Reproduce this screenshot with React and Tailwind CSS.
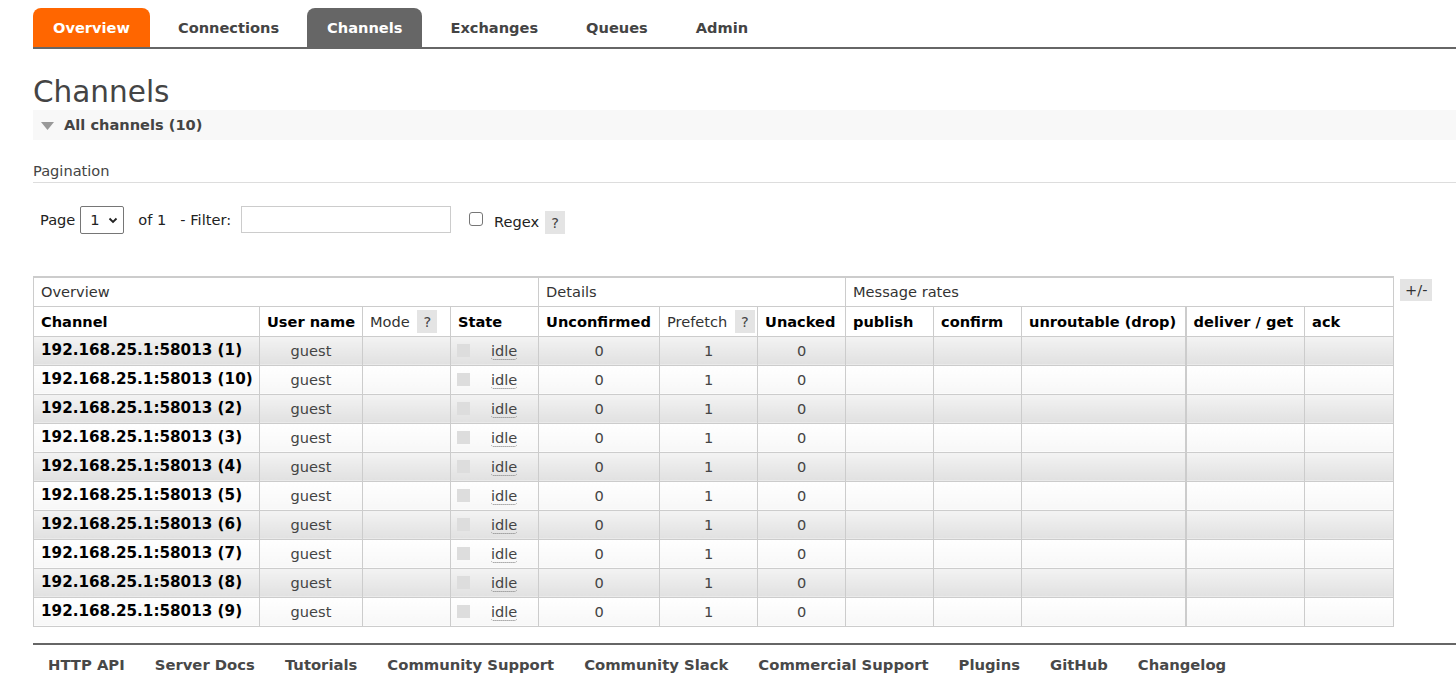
import React from 'react';

const tabs = ['Overview', 'Connections', 'Channels', 'Exchanges', 'Queues', 'Admin'];
const rows = ['1', '10', '2', '3', '4', '5', '6', '7', '8', '9'];
const footerLinks = [
  'HTTP API',
  'Server Docs',
  'Tutorials',
  'Community Support',
  'Community Slack',
  'Commercial Support',
  'Plugins',
  'GitHub',
  'Changelog',
];

function Help() {
  return (
    <span className="inline-block bg-[#e4e4e4] px-[6px] leading-[23px] text-[#444] font-normal">?</span>
  );
}

function Tab({ label }) {
  let cls = 'text-[#444]';
  if (label === 'Overview') cls = 'bg-[#ff6600] text-white';
  if (label === 'Channels') cls = 'bg-[#666666] text-white';
  return (
    <li className={`px-[20px] h-[39px] flex items-center rounded-t-[8px] font-bold ${cls}`}>{label}</li>
  );
}

export default function App() {
  const cellBase = 'border border-[#cccccc] h-[29px] p-0';
  return (
    <div
      className="min-h-screen bg-white pl-[33px] text-[14.6px] text-[#444]"
      style={{ fontFamily: '"DejaVu Sans", Verdana, sans-serif' }}
    >
      <ul className="flex gap-[8px] pt-[8px] border-b-2 border-[#666666]">
        {tabs.map((t) => (
          <Tab key={t} label={t} />
        ))}
      </ul>

      <h1 className="mt-[25px] text-[29.5px] leading-[36px] text-[#444]">Channels</h1>

      <div className="h-[30px] bg-[#f8f8f8] flex items-center pl-[8px] font-bold text-[#444]">
        <svg width="13" height="8" viewBox="0 0 13 8" className="mr-[10px] mt-[1px]">
          <polygon points="0,0 13,0 6.5,8" fill="#999" />
        </svg>
        All channels (10)
      </div>

      <div className="mt-[22px] pb-[2px] border-b border-[#dddddd] leading-[18px]">Pagination</div>

      <div className="mt-[23px] flex items-center pl-[7px] text-[#222]">
        <span>Page</span>
        <div className="ml-[5px] w-[44px] h-[28px] border border-[#767676] rounded-[2px] flex items-center pl-[9px] gap-[8px] text-[#222]">
          <span>1</span>
          <svg width="10" height="7" viewBox="0 0 10 7">
            <path d="M1.5 1.5 L5 5 L8.5 1.5" stroke="#222" strokeWidth="1.8" fill="none" />
          </svg>
        </div>
        <span className="ml-[14px]">of 1</span>
        <span className="ml-[14px]">- Filter:</span>
        <div className="ml-[10px] w-[210px] h-[27px] border border-[#cccccc] mt-[-2px]" />
        <div className="ml-[18px] w-[14px] h-[14px] border border-[#767676] rounded-[3px] mt-[-3px]" />
        <span className="ml-[11px] mt-[4px]">Regex</span>
        <span className="ml-[6px] mt-[4px]">
          <Help />
        </span>
      </div>

      <div className="mt-[42px] flex items-start">
        <table className="border-collapse table-fixed w-[1360px] border-t-2 border-[#cccccc]">
          <colgroup>
            <col className="w-[226px]" />
            <col className="w-[103px]" />
            <col className="w-[88px]" />
            <col className="w-[88px]" />
            <col className="w-[121px]" />
            <col className="w-[98px]" />
            <col className="w-[88px]" />
            <col className="w-[88px]" />
            <col className="w-[88px]" />
            <col className="w-[164px]" />
            <col className="w-[119px]" />
            <col className="w-[89px]" />
          </colgroup>
          <thead>
            <tr className="text-[#333]">
              <th colSpan={4} className={`${cellBase} font-normal text-left pl-[7px]`}>Overview</th>
              <th colSpan={3} className={`${cellBase} font-normal text-left pl-[7px]`}>Details</th>
              <th colSpan={5} className={`${cellBase} font-normal text-left pl-[7px]`}>Message rates</th>
            </tr>
            <tr className="text-black">
              <th className={`${cellBase} h-[30px] text-left pl-[7px] pt-[2px]`}>Channel</th>
              <th className={`${cellBase} h-[30px] text-left pl-[7px] pt-[2px]`}>User name</th>
              <th className={`${cellBase} h-[30px] text-left pl-[7px] font-normal text-[#333]`}>
                Mode <span className="ml-[3px]"><Help /></span>
              </th>
              <th className={`${cellBase} h-[30px] text-left pl-[7px] pt-[2px]`}>State</th>
              <th className={`${cellBase} h-[30px] text-left pl-[7px] pt-[2px]`}>Unconfirmed</th>
              <th className={`${cellBase} h-[30px] text-left pl-[7px] font-normal text-[#333]`}>
                Prefetch <span className="ml-[3px]"><Help /></span>
              </th>
              <th className={`${cellBase} h-[30px] text-left pl-[7px] pt-[2px]`}>Unacked</th>
              <th className={`${cellBase} h-[30px] text-left pl-[7px] pt-[2px]`}>publish</th>
              <th className={`${cellBase} h-[30px] text-left pl-[7px] pt-[2px]`}>confirm</th>
              <th className={`${cellBase} h-[30px] text-left pl-[7px] pt-[2px]`}>unroutable (drop)</th>
              <th className={`${cellBase} h-[30px] text-left pl-[7px] pt-[2px] border-l-2`}>deliver / get</th>
              <th className={`${cellBase} h-[30px] text-left pl-[7px] pt-[2px]`}>ack</th>
            </tr>
          </thead>
          <tbody>
            {rows.map((r, i) => {
              const bg =
                i % 2 === 0
                  ? 'bg-gradient-to-b from-[#f3f3f3] to-[#e1e1e1]'
                  : 'bg-gradient-to-b from-[#ffffff] to-[#f7f7f7]';
              const td = `${cellBase} ${bg}`;
              return (
                <tr key={r}>
                  <td className={`${td} pl-[7px] font-bold text-black text-[15.2px]`}>192.168.25.1:58013 ({r})</td>
                  <td className={`${td} text-center text-[#444]`}>guest</td>
                  <td className={td} />
                  <td className={td}>
                    <div className="flex items-center pl-[6px]">
                      <span className="w-[13px] h-[13px] bg-[#dddddd]" />
                      <span className="ml-[21px] leading-[17px] border-b border-dotted border-[#777] rounded-b-[3px] text-[#444]">
                        idle
                      </span>
                    </div>
                  </td>
                  <td className={`${td} text-center`}>0</td>
                  <td className={`${td} text-center`}>1</td>
                  <td className={`${td} text-center`}>0</td>
                  <td className={td} />
                  <td className={td} />
                  <td className={td} />
                  <td className={`${td} border-l-2`} />
                  <td className={td} />
                </tr>
              );
            })}
          </tbody>
        </table>
        <span className="ml-[6px] mt-[3px] bg-[#e4e4e4] px-[5px] leading-[22px] text-[#333]">+/-</span>
      </div>

      <div className="mt-[16px] border-t-2 border-[#666666] pt-[9px] flex pl-[15px] gap-[30px] font-bold text-[#484848] text-[14.8px]">
        {footerLinks.map((l) => (
          <span key={l}>{l}</span>
        ))}
      </div>
    </div>
  );
}
